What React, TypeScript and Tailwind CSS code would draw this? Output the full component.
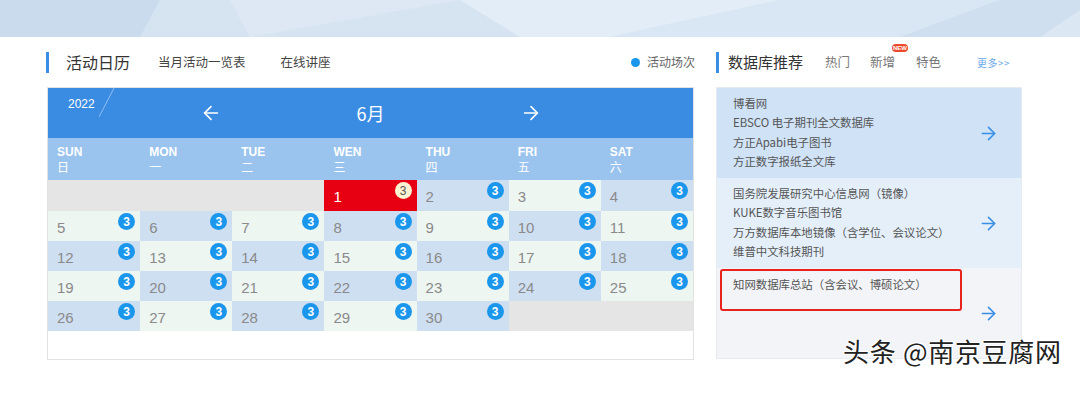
import { ArrowLeft, ArrowRight } from 'lucide-react';

const weekDays = [
  { en: 'SUN', zh: '日' },
  { en: 'MON', zh: '一' },
  { en: 'TUE', zh: '二' },
  { en: 'WEN', zh: '三' },
  { en: 'THU', zh: '四' },
  { en: 'FRI', zh: '五' },
  { en: 'SAT', zh: '六' },
];

// June 2022 starts on a Wednesday
const cells: (number | null)[] = [
  null, null, null,
  ...Array.from({ length: 30 }, (_, i) => i + 1),
  null, null,
];

const dbGroups = [
  { items: ['博看网', 'EBSCO 电子期刊全文数据库', '方正Apabi电子图书', '方正数字报纸全文库'], bg: 'bg-[#cfe2f6]' },
  { items: ['国务院发展研究中心信息网（镜像）', 'KUKE数字音乐图书馆', '万方数据库本地镜像（含学位、会议论文）', '维普中文科技期刊'], bg: 'bg-[#e4effa]' },
  { items: ['知网数据库总站（含会议、博硕论文）'], bg: 'bg-[#f2f4f7]', marked: true },
];

const latin = { fontFamily: '"Liberation Sans", "Noto Sans CJK SC", sans-serif' };

function Banner() {
  return (
    <div className="h-[37px] w-full bg-[#d3e2f1] overflow-hidden">
      <svg width="1080" height="37" viewBox="0 0 1080 37">
        <polygon points="0,0 170,0 150,37 0,37" fill="#cadbed" />
        <polygon points="160,0 560,0 600,37 140,37" fill="#d6e4f2" />
        <polygon points="230,0 460,0 250,37" fill="#dde8f4" />
        <polygon points="460,0 780,0 610,37 520,37" fill="#e3edf7" />
        <polygon points="780,0 1000,0 900,37 610,37" fill="#d9e6f3" />
        <polygon points="900,37 1000,0 1080,0 1080,37" fill="#cfdfef" />
        <polygon points="1040,37 1080,10 1080,37" fill="#dbe7f3" />
      </svg>
    </div>
  );
}

function CalendarCell({ day, index }: { day: number | null; index: number }) {
  const row = Math.floor(index / 7);
  const col = index % 7;
  if (day === null) return <div className="bg-[#e5e5e5]" />;
  const today = day === 1;
  const bg = today ? 'bg-[#e60012]' : (row + col) % 2 === 0 ? 'bg-[#cfdff2]' : 'bg-[#eef6f1]';
  return (
    <div className={`relative flex items-center pl-[9px] pt-[4px] ${bg}`} style={latin}>
      <span className={`text-[15px] ${today ? 'text-white' : 'text-[#8a8a8a]'}`}>{day}</span>
      <span
        className={`absolute right-[5px] top-[2px] flex h-[17px] w-[17px] items-center justify-center rounded-full text-[12px] ${
          today ? 'bg-[#fdf3d2] text-[#555]' : 'bg-[#1a96ec] font-bold text-white'
        }`}
      >
        3
      </span>
    </div>
  );
}

function Calendar() {
  return (
    <div className="h-[273px] border border-[#e2e2e2] bg-white">
      <div className="relative h-[50px] bg-[#3a8ce3]">
        <span className="absolute left-[20px] top-[7px] text-[12px] text-white" style={latin}>2022</span>
        <svg className="absolute left-[49px] top-0" width="20" height="30" viewBox="0 0 20 30">
          <line x1="17" y1="0" x2="2" y2="29" stroke="#8fbdf0" strokeWidth="1" />
        </svg>
        <div className="flex h-full items-center justify-center">
          <div className="grid grid-cols-3 w-[480px] items-center text-white">
            <div className="flex justify-center"><ArrowLeft size={22} strokeWidth={1.8} /></div>
            <div className="text-center text-[18px]">6月</div>
            <div className="flex justify-center"><ArrowRight size={22} strokeWidth={1.8} /></div>
          </div>
        </div>
      </div>
      <div className="grid h-[42px] grid-cols-7 bg-[#9ac4ee]">
        {weekDays.map(d => (
          <div key={d.en} className="pl-[9px] pt-[6px] text-[12px] leading-[16px] text-white" style={latin}>
            <div className="font-bold">{d.en}</div>
            <div>{d.zh}</div>
          </div>
        ))}
      </div>
      <div className="grid grid-cols-7 grid-rows-[31px_30px_30px_30px_30px]">
        {cells.map((d, i) => (
          <CalendarCell key={i} day={d} index={i} />
        ))}
      </div>
    </div>
  );
}

function DatabasePanel() {
  return (
    <div className="border border-[#e6ebf1]">
      {dbGroups.map((g, i) => (
        <div key={i} className={`relative flex h-[90px] ${g.bg}`}>
          <div className={`min-w-0 flex-1 whitespace-nowrap pl-[16px] text-[11.4px] leading-[19.3px] text-[#555] ${g.marked ? 'pt-[7px]' : 'pt-[6px]'}`}>
            {g.items.map(t => (
              <div key={t}>{t}</div>
            ))}
          </div>
          <div className="flex w-[43px] shrink-0 items-center text-[#3a8ee6]">
            <ArrowRight size={21} strokeWidth={1.8} />
          </div>
          {g.marked && (
            <div className="absolute left-[3px] top-[1px] h-[42px] w-[242px] rounded-[3px] border-2 border-[#e8231d]" />
          )}
        </div>
      ))}
    </div>
  );
}

export default function App() {
  return (
    <div
      className="relative h-[394px] w-[1080px] overflow-hidden bg-white"
      style={{ fontFamily: '"Noto Sans CJK SC", "Liberation Sans", sans-serif' }}
    >
      <Banner />
      <div className="flex gap-[22px] pl-[46px]">
        <div className="w-[648px]">
          <div className="flex h-[50px] items-center">
            <div className="h-[21px] w-[3px] bg-[#3a8ee6]" />
            <span className="ml-[17px] text-[16px] text-[#333]">活动日历</span>
            <span className="ml-[28px] text-[12.5px] text-[#444]">当月活动一览表</span>
            <span className="ml-[35px] text-[12.5px] text-[#444]">在线讲座</span>
            <span className="ml-auto h-[9px] w-[9px] rounded-full bg-[#1a96ec]" />
            <span className="ml-[7px] mr-[-1px] text-[12px] text-[#666]">活动场次</span>
          </div>
          <div className="pl-[1px]">
            <Calendar />
          </div>
        </div>
        <div className="w-[306px]">
          <div className="flex h-[50px] items-center">
            <div className="h-[21px] w-[3px] bg-[#3a8ee6]" />
            <span className="ml-[9px] text-[15px] text-[#333]">数据库推荐</span>
            <span className="ml-[22px] text-[12.5px] text-[#777]">热门</span>
            <span className="relative ml-[20px] text-[12.5px] text-[#777]">
              新增
              <span className="absolute left-[22px] top-[-9px] rounded-[4px] bg-[#ea4b2a] px-[1px] text-[6px] font-bold leading-[8px] text-white" style={latin}>
                NEW
              </span>
            </span>
            <span className="ml-[21px] text-[12.5px] text-[#777]">特色</span>
            <span className="ml-[36px] text-[10px] tracking-[0.5px] text-[#6aa8e8]">更多&gt;&gt;</span>
          </div>
          <DatabasePanel />
        </div>
      </div>
      <div
        className="absolute left-[843px] top-[331px] text-[26px] tracking-[0.7px] text-[#222]"
        style={{ textShadow: '1px 1px 0 #fff, -1px -1px 0 #fff, 1px -1px 0 #fff, -1px 1px 0 #fff' }}
      >
        头条 @南京豆腐网
      </div>
    </div>
  );
}
